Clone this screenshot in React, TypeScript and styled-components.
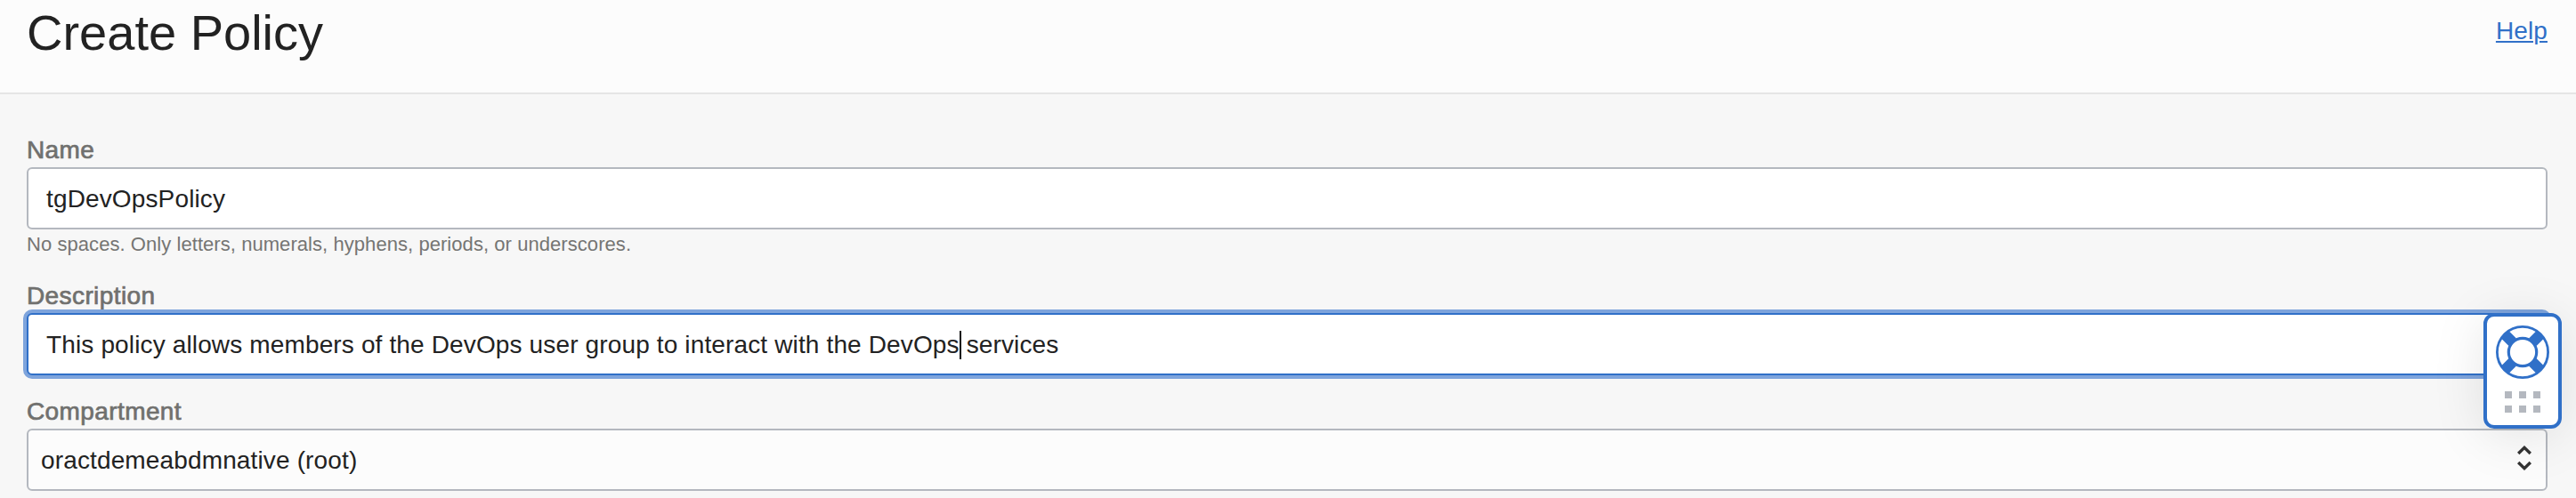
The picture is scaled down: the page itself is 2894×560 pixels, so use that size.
import React from 'react';
import styled, { createGlobalStyle, css } from 'styled-components';

const Global = createGlobalStyle`
  * { box-sizing: border-box; }
  body {
    margin: 0;
    background: #f7f7f7;
    color: #222;
    font-family: 'Liberation Sans', Arial, sans-serif;
    font-size: 28px;
    overflow: hidden;
  }
`;

const Page = styled.div`
  position: relative;
  height: 560px;
  overflow: hidden;
  background: #f7f7f7;
`;

const Header = styled.header`
  display: flex;
  justify-content: space-between;
  align-items: flex-start;
  height: 106px;
  padding: 0 32px 0 30px;
  background: #fcfcfc;
  border-bottom: 2px solid #e5e5e5;
`;

const Title = styled.h1`
  margin: 0;
  padding-top: 5px;
  font-size: 56px;
  font-weight: 400;
  line-height: 64px;
`;

const HelpLink = styled.a`
  padding-top: 18px;
  line-height: 33px;
  letter-spacing: 0.12px;
  color: #3070c8;
  text-decoration: underline;
  text-decoration-thickness: 2px;
  text-underline-offset: 2px;
`;

const Form = styled.main`
  display: flex;
  flex-direction: column;
  padding: 46px 32px 0 30px;
`;

const Field = styled.div<{ $gap: number }>`
  display: flex;
  flex-direction: column;
  margin-bottom: ${(p) => p.$gap}px;
`;

const Label = styled.label`
  height: 36px;
  line-height: 33px;
  color: #70706e;
  letter-spacing: 0.4px;
  -webkit-text-stroke: 0.7px #70706e;
`;

const Control = styled.div<{ $focused?: boolean; $select?: boolean }>`
  display: flex;
  align-items: center;
  height: 70px;
  padding: 2px 20px 0;
  border: 2px solid #b4b8bf;
  border-radius: 6px;
  background: #fff;
  letter-spacing: 0.14px;
  white-space: pre;
  ${(p) =>
    p.$focused &&
    css`
      border-color: #3070c8;
      box-shadow: 0 0 0 4px #7ea4dc;
    `}
  ${(p) =>
    p.$select &&
    css`
      justify-content: space-between;
      padding: 2px 16px 0 14px;
      background: #fcfcfc;
    `}
`;

const Caret = styled.span`
  width: 2px;
  height: 32px;
  margin-right: -2px;
  background: #111;
`;

const Hint = styled.div`
  padding-top: 2px;
  font-size: 22px;
  line-height: 29px;
  letter-spacing: 0.06px;
  color: #757573;
`;

const SupportWidget = styled.aside`
  position: absolute;
  top: 352px;
  right: 16px;
  display: flex;
  flex-direction: column;
  align-items: center;
  gap: 14px;
  width: 88px;
  height: 130px;
  padding-top: 10px;
  border: 4px solid #3070c8;
  border-radius: 12px;
  background: #fff;
  box-shadow: 0 8px 60px rgba(0, 0, 0, 0.1);
`;

const DotGrid = styled.div`
  display: grid;
  grid-template-columns: repeat(3, 8px);
  grid-auto-rows: 8px;
  gap: 8px;
`;

const Dot = styled.span`
  background: #b4b8bf;
`;

const Lifebuoy = () => (
  <svg width="60" height="60" viewBox="-30 -30 60 60" fill="none" stroke="#3070c8">
    <circle r="28.6" strokeWidth="2.8" />
    <circle r="15.7" strokeWidth="3.2" />
    {[45, 135, 225, 315].map((a) => (
      <rect key={a} x="16" y="-6" width="12" height="12" fill="#3070c8" stroke="none" transform={`rotate(${a})`} />
    ))}
  </svg>
);

const ChevronIcon = styled.svg`
  margin-top: -6px;
`;

const Chevrons = () => (
  <ChevronIcon width="16" height="28" viewBox="0 0 16 28" fill="none" stroke="#333" strokeWidth="3.4">
    <path d="M1.2 9 L8 2.4 L14.8 9" />
    <path d="M1.2 19 L8 25.6 L14.8 19" />
  </ChevronIcon>
);

export default function App() {
  return (
    <Page>
      <Global />
      <Header>
        <Title>Create Policy</Title>
        <HelpLink>Help</HelpLink>
      </Header>
      <Form>
        <Field $gap={27}>
          <Label>Name</Label>
          <Control>tgDevOpsPolicy</Control>
          <Hint>No spaces. Only letters, numerals, hyphens, periods, or underscores.</Hint>
        </Field>
        <Field $gap={24}>
          <Label>Description</Label>
          <Control $focused>
            <span>This policy allows members of the DevOps user group to interact with the DevOps</span>
            <Caret />
            <span> services</span>
          </Control>
        </Field>
        <Field $gap={0}>
          <Label>Compartment</Label>
          <Control $select>
            <span>oractdemeabdmnative (root)</span>
            <Chevrons />
          </Control>
        </Field>
      </Form>
      <SupportWidget>
        <Lifebuoy />
        <DotGrid>
          {[0, 1, 2, 3, 4, 5].map((i) => (
            <Dot key={i} />
          ))}
        </DotGrid>
      </SupportWidget>
    </Page>
  );
}
